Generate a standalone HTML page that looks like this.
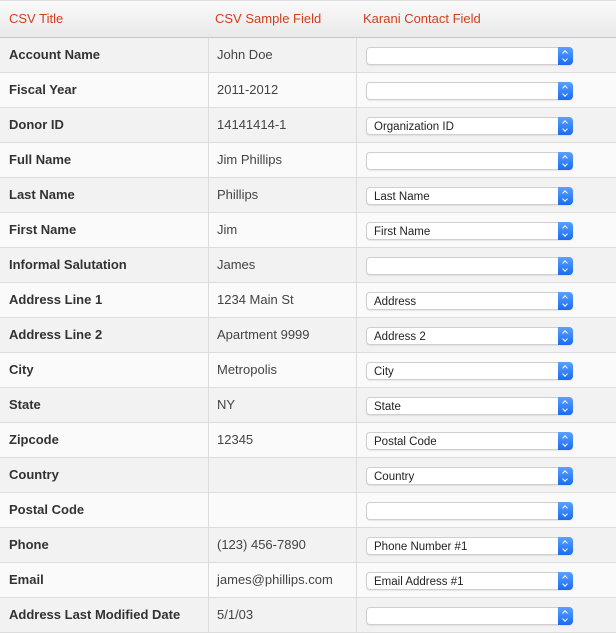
<!DOCTYPE html><html><head><style>
*{margin:0;padding:0;box-sizing:border-box}
body{width:616px;height:633px;overflow:hidden;background:#fff;font-family:"Liberation Sans",sans-serif;position:relative}
.hd{position:absolute;left:0;top:0;width:616px;height:38px;background:linear-gradient(#fafafa,#e9e9e9);border-bottom:1px solid #c8c8c8;border-top:1px solid #ddd}
.hd span{position:absolute;top:10px;font-size:13px;color:#d0401e}
.r{position:absolute;left:0;width:616px;height:35px;border-bottom:1px solid #dcdcdc;font-size:13px;color:#444}
.r:nth-child(odd){background:#f2f2f2}.r:nth-child(even){background:#fafafa}
.c1{position:absolute;left:9px;top:9px;font-weight:bold;color:#333}
.c2{position:absolute;left:217px;top:9px}
.v1,.v2{position:absolute;top:0;height:35px;border-left:1px solid #dcdcdc}
.v1{left:208px}.v2{left:356px}
.s{position:absolute;left:366px;top:9px;width:207px;height:18px;background:#fff;border:1px solid #cfcfcf;border-radius:4px;font-size:11.5px;line-height:16px;color:#222;padding:1px 0 0 7px;box-shadow:0 1px 1px rgba(0,0,0,.08)}
.s i{position:absolute;right:-1px;top:-1px;width:15px;height:18px;background:linear-gradient(#5aa0ff,#1a6cf0);border-radius:0 4px 4px 0}
.s i:before{content:"";position:absolute;left:5px;top:4px;width:3px;height:3px;border-left:1.2px solid #fff;border-top:1.2px solid #fff;transform:rotate(45deg)}
.s i:after{content:"";position:absolute;left:5px;top:10px;width:3px;height:3px;border-right:1.2px solid #fff;border-bottom:1.2px solid #fff;transform:rotate(45deg)}
</style></head><body>
<div class="hd"><span style="left:9px">CSV Title</span><span style="left:215px">CSV Sample Field</span><span style="left:363px">Karani Contact Field</span></div>
<div id="rows" style="position:absolute;left:0;top:38px">
<div class="r" style="top:0"><span class="c1">Account Name</span><span class="c2">John Doe</span><div class="v1"></div><div class="v2"></div><div class="s"><i></i></div></div>
<div class="r" style="top:35px"><span class="c1">Fiscal Year</span><span class="c2">2011-2012</span><div class="v1"></div><div class="v2"></div><div class="s"><i></i></div></div>
<div class="r" style="top:70px"><span class="c1">Donor ID</span><span class="c2">14141414-1</span><div class="v1"></div><div class="v2"></div><div class="s">Organization ID<i></i></div></div>
<div class="r" style="top:105px"><span class="c1">Full Name</span><span class="c2">Jim Phillips</span><div class="v1"></div><div class="v2"></div><div class="s"><i></i></div></div>
<div class="r" style="top:140px"><span class="c1">Last Name</span><span class="c2">Phillips</span><div class="v1"></div><div class="v2"></div><div class="s">Last Name<i></i></div></div>
<div class="r" style="top:175px"><span class="c1">First Name</span><span class="c2">Jim</span><div class="v1"></div><div class="v2"></div><div class="s">First Name<i></i></div></div>
<div class="r" style="top:210px"><span class="c1">Informal Salutation</span><span class="c2">James</span><div class="v1"></div><div class="v2"></div><div class="s"><i></i></div></div>
<div class="r" style="top:245px"><span class="c1">Address Line 1</span><span class="c2">1234 Main St</span><div class="v1"></div><div class="v2"></div><div class="s">Address<i></i></div></div>
<div class="r" style="top:280px"><span class="c1">Address Line 2</span><span class="c2">Apartment 9999</span><div class="v1"></div><div class="v2"></div><div class="s">Address 2<i></i></div></div>
<div class="r" style="top:315px"><span class="c1">City</span><span class="c2">Metropolis</span><div class="v1"></div><div class="v2"></div><div class="s">City<i></i></div></div>
<div class="r" style="top:350px"><span class="c1">State</span><span class="c2">NY</span><div class="v1"></div><div class="v2"></div><div class="s">State<i></i></div></div>
<div class="r" style="top:385px"><span class="c1">Zipcode</span><span class="c2">12345</span><div class="v1"></div><div class="v2"></div><div class="s">Postal Code<i></i></div></div>
<div class="r" style="top:420px"><span class="c1">Country</span><span class="c2"></span><div class="v1"></div><div class="v2"></div><div class="s">Country<i></i></div></div>
<div class="r" style="top:455px"><span class="c1">Postal Code</span><span class="c2"></span><div class="v1"></div><div class="v2"></div><div class="s"><i></i></div></div>
<div class="r" style="top:490px"><span class="c1">Phone</span><span class="c2">(123) 456-7890</span><div class="v1"></div><div class="v2"></div><div class="s">Phone Number #1<i></i></div></div>
<div class="r" style="top:525px"><span class="c1">Email</span><span class="c2">james@phillips.com</span><div class="v1"></div><div class="v2"></div><div class="s">Email Address #1<i></i></div></div>
<div class="r" style="top:560px"><span class="c1">Address Last Modified Date</span><span class="c2">5/1/03</span><div class="v1"></div><div class="v2"></div><div class="s"><i></i></div></div>
</div>
</body></html>
